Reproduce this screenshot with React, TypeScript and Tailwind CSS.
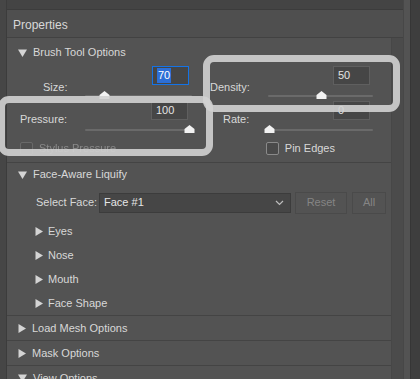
import React from 'react';

const DownTri = () => (
  <svg width="9" height="8" viewBox="0 0 9 8" className="shrink-0"><path d="M0 0.5 L9 0.5 L4.5 8 Z" fill="#d4d4d4" /></svg>
);

const RightTri = () => (
  <svg width="8" height="9" viewBox="0 0 8 9" className="shrink-0"><path d="M0.5 0 L8 4.5 L0.5 9 Z" fill="#d4d4d4" /></svg>
);

const Thumb = () => (
  <svg width="11" height="8" viewBox="0 0 11 8"><path d="M5.5 0 L10.5 4 L10.5 8 L0.5 8 L0.5 4 Z" fill="#f2f2f2" /></svg>
);

interface ControlProps {
  label: string;
  value: string;
  pct: number;
  labelCls: string;
  colCls: string;
  inputCls: string;
  trackCls: string;
  focused?: boolean;
}

const Control: React.FC<ControlProps> = ({ label, value, pct, labelCls, colCls, inputCls, trackCls, focused }) => (
  <div className="flex items-start">
    <span className={`leading-[14px] ${labelCls}`}>{label}</span>
    <div className={`flex flex-col items-end ${colCls}`}>
      <div className={`w-[37px] h-[19px] flex items-center pl-[4px] bg-[#464646] border ${focused ? 'border-[#1473e6]' : 'border-[#5f5f5f]'} ${inputCls}`}>
        {focused ? <span className="bg-[#2d6fd6] text-white leading-[15px] px-[1px]">{value}</span> : <span className="text-[#e4e4e4]">{value}</span>}
      </div>
      <div className={`relative w-full h-[8px] ${trackCls}`}>
        <div className="absolute left-0 right-0 top-[4px] h-[2px] bg-[#6a6a6a] rounded" />
        <div className="absolute top-0" style={{ left: `calc(${pct}% - 5px)` }}><Thumb /></div>
      </div>
    </div>
  </div>
);

const Checkbox: React.FC<{ label: string; dim?: boolean }> = ({ label, dim }) => (
  <div className={`flex items-center gap-[6px] ${dim ? 'opacity-40' : ''}`}>
    <div className="w-[13px] h-[13px] border border-[#8a8a8a] bg-[#4a4a4a] rounded-[2px]" />
    <span>{label}</span>
  </div>
);

const SubItem: React.FC<{ label: string }> = ({ label }) => (
  <div className="h-[24px] flex items-center pl-[28px] gap-[5px]">
    <RightTri />
    <span>{label}</span>
  </div>
);

const Section: React.FC<{ label: string; open?: boolean }> = ({ label, open }) => (
  <div className="h-[25px] flex items-center pl-[11px] gap-[6px] border-b border-[#444444]">
    {open ? <DownTri /> : <RightTri />}
    <span>{label}</span>
  </div>
);

export default function App() {
  return (
    <div className="w-[420px] h-[379px] flex overflow-hidden bg-[#3e3e3e] text-[#d8d8d8] text-[11px] relative" style={{ fontFamily: '"Liberation Sans", Arial, sans-serif' }}>
      <div className="w-[7px] bg-[#464646] border-r border-[#3c3c3c] shrink-0" />
      <div className="w-[396px] flex flex-col shrink-0">
        <div className="h-[10px] bg-[#444444] border-b border-[#3c3c3c] shrink-0" />
        <div className="h-[28px] flex items-center pl-[6px] pt-[2px] bg-[#4f4f4f] border-b border-[#424242] shrink-0 text-[12px]">Properties</div>
        <div className="flex flex-1 min-h-0">
          <div className="w-[385px] bg-[#535353] border-r border-[#474747]">
            <div className="h-[26px] flex items-center pl-[11px] pt-[3px] gap-[6px]">
              <DownTri />
              <span>Brush Tool Options</span>
            </div>
            <div className="grid grid-cols-[193px_192px] h-[35px]">
              <Control label="Size:" value="70" pct={18} focused labelCls="ml-[36px] mt-[16px] w-[42px]" colCls="w-[107px] mt-[2px]" inputCls="mr-[3px]" trackCls="mt-[6px]" />
              <Control label="Density:" value="50" pct={50} labelCls="ml-[10px] mt-[16px] w-[58px]" colCls="w-[105px] mt-[2px]" inputCls="mr-[3px]" trackCls="mt-[6px]" />
            </div>
            <div className="grid grid-cols-[193px_192px] h-[36px]">
              <Control label="Pressure:" value="100" pct={97} labelCls="ml-[13px] mt-[13px] w-[65px]" colCls="w-[107px] mt-[2px]" inputCls="mr-[4px]" trackCls="mt-[5px]" />
              <Control label="Rate:" value="0" pct={4} labelCls="ml-[23px] mt-[13px] w-[42px]" colCls="w-[108px] mt-[2px]" inputCls="mr-[3px]" trackCls="mt-[5px]" />
            </div>
            <div className="flex justify-between items-center mt-[7px] h-[13px] pl-[13px] pr-[56px]">
              <Checkbox label="Stylus Pressure" dim />
              <Checkbox label="Pin Edges" />
            </div>
            <div className="h-[8px] border-b border-[#444444]" />
            <div className="h-[23px] flex items-center pl-[11px] gap-[6px]">
              <DownTri />
              <span>Face-Aware Liquify</span>
            </div>
            <div className="h-[33px] flex items-center pl-[29px]">
              <span className="w-[63px]">Select Face:</span>
              <div className="w-[192px] h-[20px] flex items-center justify-between pl-[4px] pr-[6px] bg-[#464646] border border-[#3c3c3c]">
                <span className="text-[#e6e6e6]">Face #1</span>
                <svg width="9" height="6" viewBox="0 0 9 6"><path d="M1 1 L4.5 4.5 L8 1" stroke="#bdbdbd" strokeWidth="1.2" fill="none" /></svg>
              </div>
              <div className="ml-[4px] w-[52px] h-[22px] flex items-center justify-center border border-[#4a4a4a] text-[#858585]">Reset</div>
              <div className="ml-[5px] w-[34px] h-[22px] flex items-center justify-center border border-[#4a4a4a] text-[#858585]">All</div>
            </div>
            <div className="border-b border-[#444444]">
              <SubItem label="Eyes" />
              <SubItem label="Nose" />
              <SubItem label="Mouth" />
              <SubItem label="Face Shape" />
            </div>
            <Section label="Load Mesh Options" />
            <Section label="Mask Options" />
            <Section label="View Options" open />
          </div>
          <div className="flex-1 bg-[#4b4b4b]" />
        </div>
      </div>
      <div className="w-[7px] bg-[#535353] border-l border-[#474747] shrink-0" />
      <div className="flex-1 bg-[#3e3e3e] border-l border-[#363636]" />

      {/* annotation highlights */}
      <div className="absolute left-[203px] top-[55px] w-[197px] h-[57px] rounded-[11px] border-[7px] border-[#d2d2d2]/90 blur-[0.6px] pointer-events-none" />
      <div className="absolute left-[-2px] top-[96px] w-[215px] h-[60px] rounded-[11px] border-[7px] border-[#d2d2d2]/90 blur-[0.6px] pointer-events-none" />
    </div>
  );
}
